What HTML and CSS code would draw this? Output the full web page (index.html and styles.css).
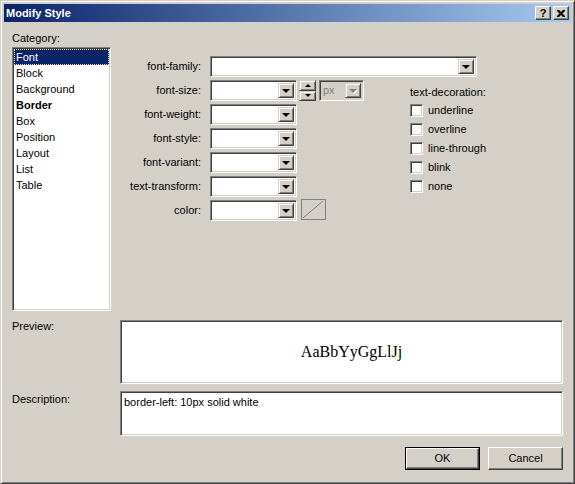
FILE: index.html
```html
<!DOCTYPE html>
<html>
<head>
<meta charset="utf-8">
<title>Modify Style</title>
<link rel="stylesheet" href="styles.css">
</head>
<body>
<div class="window">
  <div class="titlebar">
    <span class="title">Modify Style</span>
    <div class="caption-btns">
      <span class="cap-btn help">?</span>
      <span class="cap-btn close"><svg width="8" height="7" viewBox="0 0 8 7"><path d="M0 0h2l2 2 2-2h2v1l-2.5 2.5L8 6v1H6L4 5 2 7H0V6l2.5-2.5L0 1z" fill="#000"/></svg></span>
    </div>
  </div>
  <div class="body">
    <div class="top">
      <div class="cat">
        <div class="lbl">Category:</div>
        <ul class="listbox">
          <li class="sel">Font</li>
          <li>Block</li>
          <li>Background</li>
          <li class="bold">Border</li>
          <li>Box</li>
          <li>Position</li>
          <li>Layout</li>
          <li>List</li>
          <li>Table</li>
        </ul>
      </div>
      <div class="panel">
        <div class="frow">
          <span class="flabel">font-family:</span>
          <span class="combo wide"><span class="dd"><i class="arrow"></i></span></span>
        </div>
        <div class="lower">
          <div class="fgrid">
            <div class="frow">
              <span class="flabel">font-size:</span>
              <span class="combo"><span class="dd"><i class="arrow"></i></span></span>
              <span class="spin"><span class="sb up"><i class="sarrow up"></i></span><span class="sb down"><i class="sarrow dn"></i></span></span>
              <span class="combo unit disabled"><span class="ph">px</span><span class="dd"><i class="arrow"></i></span></span>
            </div>
            <div class="frow">
              <span class="flabel">font-weight:</span>
              <span class="combo"><span class="dd"><i class="arrow"></i></span></span>
            </div>
            <div class="frow">
              <span class="flabel">font-style:</span>
              <span class="combo"><span class="dd"><i class="arrow"></i></span></span>
            </div>
            <div class="frow">
              <span class="flabel">font-variant:</span>
              <span class="combo"><span class="dd"><i class="arrow"></i></span></span>
            </div>
            <div class="frow">
              <span class="flabel">text-transform:</span>
              <span class="combo"><span class="dd"><i class="arrow"></i></span></span>
            </div>
            <div class="frow">
              <span class="flabel">color:</span>
              <span class="combo"><span class="dd"><i class="arrow"></i></span></span>
              <span class="swatch"><svg width="22" height="19" viewBox="0 0 22 19"><line x1="1" y1="18" x2="21" y2="1" stroke="#808080" stroke-width="1"/></svg></span>
            </div>
          </div>
          <div class="decor">
            <div class="dlabel">text-decoration:</div>
            <div class="chk"><span class="box"></span><span>underline</span></div>
            <div class="chk"><span class="box"></span><span>overline</span></div>
            <div class="chk"><span class="box"></span><span>line-through</span></div>
            <div class="chk"><span class="box"></span><span>blink</span></div>
            <div class="chk"><span class="box"></span><span>none</span></div>
          </div>
        </div>
      </div>
    </div>
    <div class="row preview-row">
      <div class="rlabel">Preview:</div>
      <div class="preview"><span class="sample">AaBbYyGgLlJj</span></div>
    </div>
    <div class="row desc-row">
      <div class="rlabel">Description:</div>
      <div class="desc">border-left: 10px solid white</div>
    </div>
    <div class="actions">
      <span class="btn default"><span class="btn-in">OK</span></span>
      <span class="btn"><span class="btn-in">Cancel</span></span>
    </div>
  </div>
</div>
</body>
</html>
```
FILE: styles.css
```css
* { box-sizing: border-box; }
html, body { margin: 0; padding: 0; background: #d4d0c8; }
body {
  font-family: "Liberation Sans", Arial, sans-serif;
  font-size: 11px;
  line-height: 13px;
  color: #000;
}
.window {
  width: 575px;
  height: 484px;
  border: 1px solid;
  border-color: #d4d0c8 #404040 #404040 #d4d0c8;
  box-shadow: inset 1px 1px #fff, inset -1px -1px #808080;
  padding: 3px;
  background: #d4d0c8;
  display: flex;
  flex-direction: column;
}
.titlebar {
  height: 18px;
  background: linear-gradient(to right, #0a246a, #a6caf0);
  display: flex;
  align-items: center;
  justify-content: space-between;
  padding: 0 2px 0 2px;
}
.title {
  color: #fff;
  font-weight: bold;
  font-size: 11px;
}
.caption-btns { display: flex; gap: 2px; }
.cap-btn {
  width: 16px;
  height: 14px;
  border: 1px solid;
  border-color: #fff #404040 #404040 #fff;
  box-shadow: inset -1px -1px #808080, inset 1px 1px #d4d0c8;
  background: #d4d0c8;
  display: flex;
  align-items: center;
  justify-content: center;
  font-weight: bold;
  font-size: 11px;
  line-height: 12px;
}
.cap-btn svg { display: block; }

.body {
  flex: 1;
  padding: 10px 8px 0 8px;
  display: flex;
  flex-direction: column;
}
.top { display: flex; }
.cat { width: 99px; }
.lbl { height: 13px; }
.listbox {
  list-style: none;
  margin: 2px 0 0 0;
  height: 264px;
  background: #fff;
  border: 1px solid;
  border-color: #808080 #fff #fff #808080;
  box-shadow: inset 1px 1px #404040, inset -1px -1px #d4d0c8;
  padding: 1px;
}
.listbox li {
  height: 16px;
  line-height: 16px;
  padding-left: 2px;
}
.listbox li.sel {
  background: #0a246a;
  color: #fff;
  outline: 1px dotted #f5db95;
  outline-offset: -1px;
}
.listbox li.bold { font-weight: bold; }

.panel { flex: 1; padding-top: 24px; }
.frow {
  display: flex;
  align-items: center;
  height: 21px;
  margin-bottom: 3px;
}
.flabel {
  width: 90px;
  text-align: right;
  margin-right: 9px;
}
.combo {
  width: 87px;
  height: 21px;
  background: #fff;
  border: 1px solid;
  border-color: #808080 #fff #fff #808080;
  box-shadow: inset 1px 1px #404040, inset -1px -1px #d4d0c8;
  padding: 2px;
  display: flex;
  justify-content: flex-end;
  align-items: stretch;
}
.combo.wide { width: 267px; }
.dd {
  width: 16px;
  border: 1px solid;
  border-color: #d4d0c8 #404040 #404040 #d4d0c8;
  box-shadow: inset 1px 1px #fff, inset -1px -1px #808080;
  background: #d4d0c8;
  display: flex;
  align-items: center;
  justify-content: center;
}
.arrow {
  width: 0;
  height: 0;
  border-left: 4px solid transparent;
  border-right: 4px solid transparent;
  border-top: 4px solid #000;
  margin-top: 1px;
}
.combo.disabled { background: #d4d0c8; width: 45px; margin-left: 3px; justify-content: space-between; }
.combo.disabled .arrow { border-top-color: #808080; filter: drop-shadow(1px 1px 0 #fff); }
.ph { color: #808080; padding-left: 1px; line-height: 15px; }
.spin {
  display: flex;
  flex-direction: column;
  width: 17px;
  height: 21px;
  margin-left: 2px;
}
.sb {
  flex: 1;
  border: 1px solid;
  border-color: #d4d0c8 #404040 #404040 #d4d0c8;
  box-shadow: inset 1px 1px #fff, inset -1px -1px #808080;
  background: #d4d0c8;
  display: flex;
  align-items: center;
  justify-content: center;
}
.sarrow { width: 0; height: 0; border-left: 3px solid transparent; border-right: 3px solid transparent; }
.sarrow.up { border-bottom: 3px solid #000; }
.sarrow.dn { border-top: 3px solid #000; }
.swatch {
  width: 25px;
  height: 21px;
  margin-left: 4px;
  margin-top: -2px;
  border: 1px solid #808080;
  background: #d4d0c8;
  display: block;
}
.swatch svg { display: block; }

.lower { display: flex; }
.fgrid { width: 299px; }
.decor { padding-top: 6px; }
.dlabel { height: 13px; margin-bottom: 2px; }
.chk {
  display: flex;
  align-items: center;
  height: 19px;
  gap: 5px;
}
.chk .box {
  width: 13px;
  height: 13px;
  background: #fff;
  border: 1px solid;
  border-color: #808080 #fff #fff #808080;
  box-shadow: inset 1px 1px #404040, inset -1px -1px #d4d0c8;
}

.row { display: flex; }
.rlabel { width: 108px; }
.preview-row { margin-top: 9px; }
.preview {
  width: 443px;
  height: 64px;
  background: #fff;
  border: 1px solid;
  border-color: #808080 #fff #fff #808080;
  box-shadow: inset 1px 1px #404040, inset -1px -1px #d4d0c8;
  display: flex;
  align-items: center;
  justify-content: center;
  padding-left: 20px;
}
.sample {
  font-family: "Liberation Serif", "Times New Roman", serif;
  font-size: 16px;
  line-height: 18px;
}
.desc-row { margin-top: 7px; }
.desc-row .rlabel { padding-top: 2px; }
.desc {
  width: 443px;
  height: 45px;
  background: #fff;
  border: 1px solid;
  border-color: #808080 #fff #fff #808080;
  box-shadow: inset 1px 1px #404040, inset -1px -1px #d4d0c8;
  padding: 4px 3px;
}
.actions {
  display: flex;
  justify-content: flex-end;
  gap: 8px;
  margin-top: 11px;
}
.btn {
  width: 75px;
  height: 23px;
  display: flex;
}
.btn-in {
  flex: 1;
  border: 1px solid;
  border-color: #fff #404040 #404040 #fff;
  box-shadow: inset -1px -1px #808080, inset 1px 1px #d4d0c8;
  display: flex;
  align-items: center;
  justify-content: center;
  background: #d4d0c8;
}
.btn.default { border: 1px solid #000; }
```
